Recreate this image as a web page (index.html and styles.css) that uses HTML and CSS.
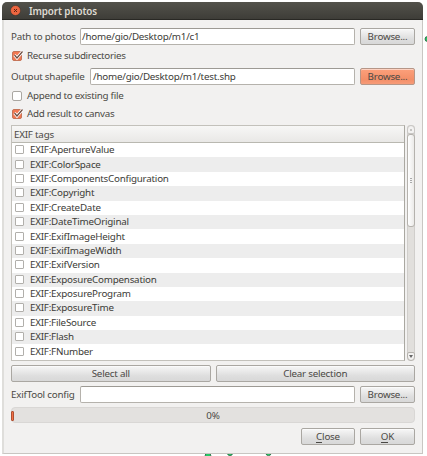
FILE: index.html
```html
<!DOCTYPE html>
<html lang="en">
<head>
<meta charset="utf-8">
<title>Import photos</title>
<link rel="stylesheet" href="styles.css">
</head>
<body>
<svg class="canvas-marks" width="427" height="456" viewBox="0 0 427 456" aria-hidden="true">
  <g fill="#27c765" stroke="#245c3b" stroke-width=".8">
    <circle cx="427.5" cy="39" r="2.5"/>
    <circle cx="208" cy="455.500" r="2.8"/>
    <circle cx="230" cy="453" r="2.6"/>
    <circle cx="268.500" cy="453" r="2.6"/>
  </g>
  <path d="M324 453.500h2" stroke="#444"/>
</svg>
<main class="dialog">
  <header class="titlebar">
    <svg class="close-icon" width="11" height="11" viewBox="0 0 11 11"><circle cx="5.500" cy="5.500" r="5" fill="#ee6640" stroke="#2f2e29" stroke-width=".5"/><path d="M4 4l3 3M7 4l-3 3" stroke="#5b2415" stroke-width="1"/></svg>
    <h1>Import photos</h1>
  </header>
  <div class="content">
    <div class="field"><label class="path-label">Path to photos</label><div class="input">/home/gio/Desktop/m1/c1</div><button class="browse">Browse...</button></div>
    <div class="option recurse"><span class="check on"><svg width="12" height="11" viewBox="0 0 12 11"><path d="M2.500 5l2.500 3L10.500 1.500" fill="none" stroke="#fff" stroke-width="3"/><path d="M2.500 5l2.500 3L10.500 1.500" fill="none" stroke="#6b4a3e" stroke-width="1.200"/></svg></span><span>Recurse subdirectories</span></div>
    <div class="field"><label class="output-label">Output shapefile</label><div class="input">/home/gio/Desktop/m1/test.shp</div><button class="browse active">Browse...</button></div>
    <div class="option append"><span class="check"></span><span>Append to existing file</span></div>
    <div class="option add"><span class="check on"><svg width="12" height="11" viewBox="0 0 12 11"><path d="M2.500 5l2.500 3L10.500 1.500" fill="none" stroke="#fff" stroke-width="3"/><path d="M2.500 5l2.500 3L10.500 1.500" fill="none" stroke="#6b4a3e" stroke-width="1.200"/></svg></span><span>Add result to canvas</span></div>
    <div class="table-area">
      <section class="table">
        <div class="table-head">EXIF tags</div>
        <ul>
          <li><i></i><span>EXIF:ApertureValue</span></li>
          <li><i></i><span>EXIF:ColorSpace</span></li>
          <li><i></i><span>EXIF:ComponentsConfiguration</span></li>
          <li><i></i><span>EXIF:Copyright</span></li>
          <li><i></i><span>EXIF:CreateDate</span></li>
          <li><i></i><span>EXIF:DateTimeOriginal</span></li>
          <li><i></i><span>EXIF:ExifImageHeight</span></li>
          <li><i></i><span>EXIF:ExifImageWidth</span></li>
          <li><i></i><span>EXIF:ExifVersion</span></li>
          <li><i></i><span>EXIF:ExposureCompensation</span></li>
          <li><i></i><span>EXIF:ExposureProgram</span></li>
          <li><i></i><span>EXIF:ExposureTime</span></li>
          <li><i></i><span>EXIF:FileSource</span></li>
          <li><i></i><span>EXIF:Flash</span></li>
          <li><i></i><span>EXIF:FNumber</span></li>
        </ul>
      </section>
      <div class="scrollbar"><span class="up"></span><span class="thumb"><b></b></span><span class="down"><svg width="4" height="3" viewBox="0 0 4 3"><path d="M0 0h4L2 3z" fill="#666"/></svg></span></div>
    </div>
    <div class="selection"><button>Select all</button><button>Clear selection</button></div>
    <div class="field"><label class="path-label">ExifTool config</label><div class="input"></div><button class="browse">Browse...</button></div>
    <div class="progress"><span class="bar"></span><span>0%</span></div>
    <footer><button class="close"><span class="key">C</span>lose</button><button class="ok"><span class="key">O</span>K</button></footer>
  </div>
</main>
</body>
</html>
```
FILE: styles.css
```css
* { box-sizing: border-box; }
body { margin: 0; width: 427px; height: 456px; padding: 2px 0 0 2px; background: #fff; color: #4b4945; font: 9.8px/14px "Noto Sans", sans-serif; letter-spacing: -.22px; overflow: hidden; }
.canvas-marks { position: absolute; top: 0; left: 0; }
.dialog { position: relative; width: 421px; height: 452px; background: #f2f1f0; border: 1px solid #c8c6c2; border-left: 2px solid #dfdedb; border-top: 0; border-radius: 5px 5px 0 0; }
.titlebar { height: 18px; margin: 0 -1px 0 -2px; padding-left: 8px; display: flex; align-items: center; gap: 8px; background: linear-gradient(#53524b, #3e3d38); border-bottom: 1px solid #292824; border-radius: 5px 5px 0 0; }
.close-icon { display: block; }
h1 { margin: 0; color: #dfdbd2; font-size: 9.8px; line-height: 17px; font-weight: 600; letter-spacing: -.1px; padding-top: 1px; }
.content { padding: 8px 7px 0 7px; display: flex; flex-direction: column; }
.field { display: flex; height: 17px; align-items: center; flex: none; }
.path-label { width: 69px; white-space: nowrap; }
.output-label { width: 79px; white-space: nowrap; }
.input { height: 17px; flex: 1; min-width: 0; padding: 0 1px; border: 1px solid #b5b2ac; border-top-color: #9d9a94; border-radius: 2px; background: #fff; color: #3c3b37; line-height: 15px; }
.output-label + .input { padding-left: 2px; }
button { height: 17px; padding: 0; border: 1px solid #aaa7a2; border-radius: 2px; color: #4b4945; background: linear-gradient(#f7f7f7, #dedede 65%, #d8d8d8); box-shadow: inset 0 1px #fff8; font: inherit; letter-spacing: inherit; line-height: 15px; }
.browse { width: 55px; margin-left: 5px; flex: none; }
.browse.active { background: linear-gradient(#fca07b, #f38f68 70%, #f79b78); border-color: #b69687; }
.option { display: flex; align-items: center; height: 14px; gap: 5px; padding-left: 1px; flex: none; letter-spacing: -.28px; }
.check { width: 10px; height: 10px; border: 1px solid #aaa7a2; border-radius: 2px; background: #fff; }
.check.on { background: #f27851; border-color: #c57458; }
.check svg { display: block; margin: -2px 0 0 -1px; }
.recurse { margin: 4px 0 5px; }
.append { margin: 4px 0; }
.table-area { margin-top: 4px; height: 236px; display: flex; justify-content: space-between; flex: none; }
.table { width: 394px; height: 236px; border: 1px solid #c3c1bb; border-right: 1px solid #aaa8a1; background: #fff; overflow: hidden; }
.table-head { height: 17px; padding-left: 2px; line-height: 17px; border-bottom: 1px solid #b9b8b0; background: linear-gradient(#f7f7f6, #e9e8e6); }
ul { margin: 0; padding: 0; list-style: none; color: #3c3b37; }
li { height: 14.4px; display: flex; align-items: center; gap: 6px; padding-left: 3px; }
li:nth-child(even) { background: #ededed; }
li i { width: 9px; height: 9px; margin-top: -1px; border: 1px solid #b1afab; border-radius: 1px; background: #fff; flex: none; }
.scrollbar { width: 8px; height: 236px; display: flex; flex-direction: column; justify-content: space-between; background: #e1dfdc; border-radius: 4px; box-shadow: inset 0 0 0 1px #d0cecb; }
.up, .down { height: 9px; flex: none; border: 1px solid #c8c6c3; border-radius: 4px 4px 2px 2px; background: #f3f2f1; display: flex; align-items: center; justify-content: center; }
.up::before { content: ""; width: 2px; height: 2px; background: #c5c4c2; }
.down { border-radius: 2px 2px 4px 4px; border-color: #b5b2ad; }
.thumb { height: 93px; margin-bottom: auto; border: 1px solid #b5b2ad; border-radius: 3px; background: linear-gradient(90deg, #fff, #ebeae8); display: flex; align-items: center; justify-content: center; }
.thumb b { width: 2px; height: 5px; background: repeating-linear-gradient(#aaa 0 1px, #f5f5f5 1px 2px); }
.selection { display: flex; gap: 5px; margin: 4px 0 4px; flex: none; }
.selection button { flex: 1; }
.progress { position: relative; height: 16px; margin-top: 4px; border: 1px solid #d9d7d5; border-radius: 4px; background: #e3e1df; text-align: center; line-height: 16px; flex: none; }
.progress .bar { position: absolute; left: -1px; top: 3px; width: 3px; height: 10px; border: 1px solid #af4f31; border-radius: 1px; background: #f27046; }
footer { display: flex; justify-content: flex-end; gap: 5px; margin-top: 5px; }
footer .close { width: 54px; }
footer .ok { width: 55px; }
.key { display: inline-block; height: 12px; line-height: 11px; border-bottom: 1px solid #4b4945; }
```
